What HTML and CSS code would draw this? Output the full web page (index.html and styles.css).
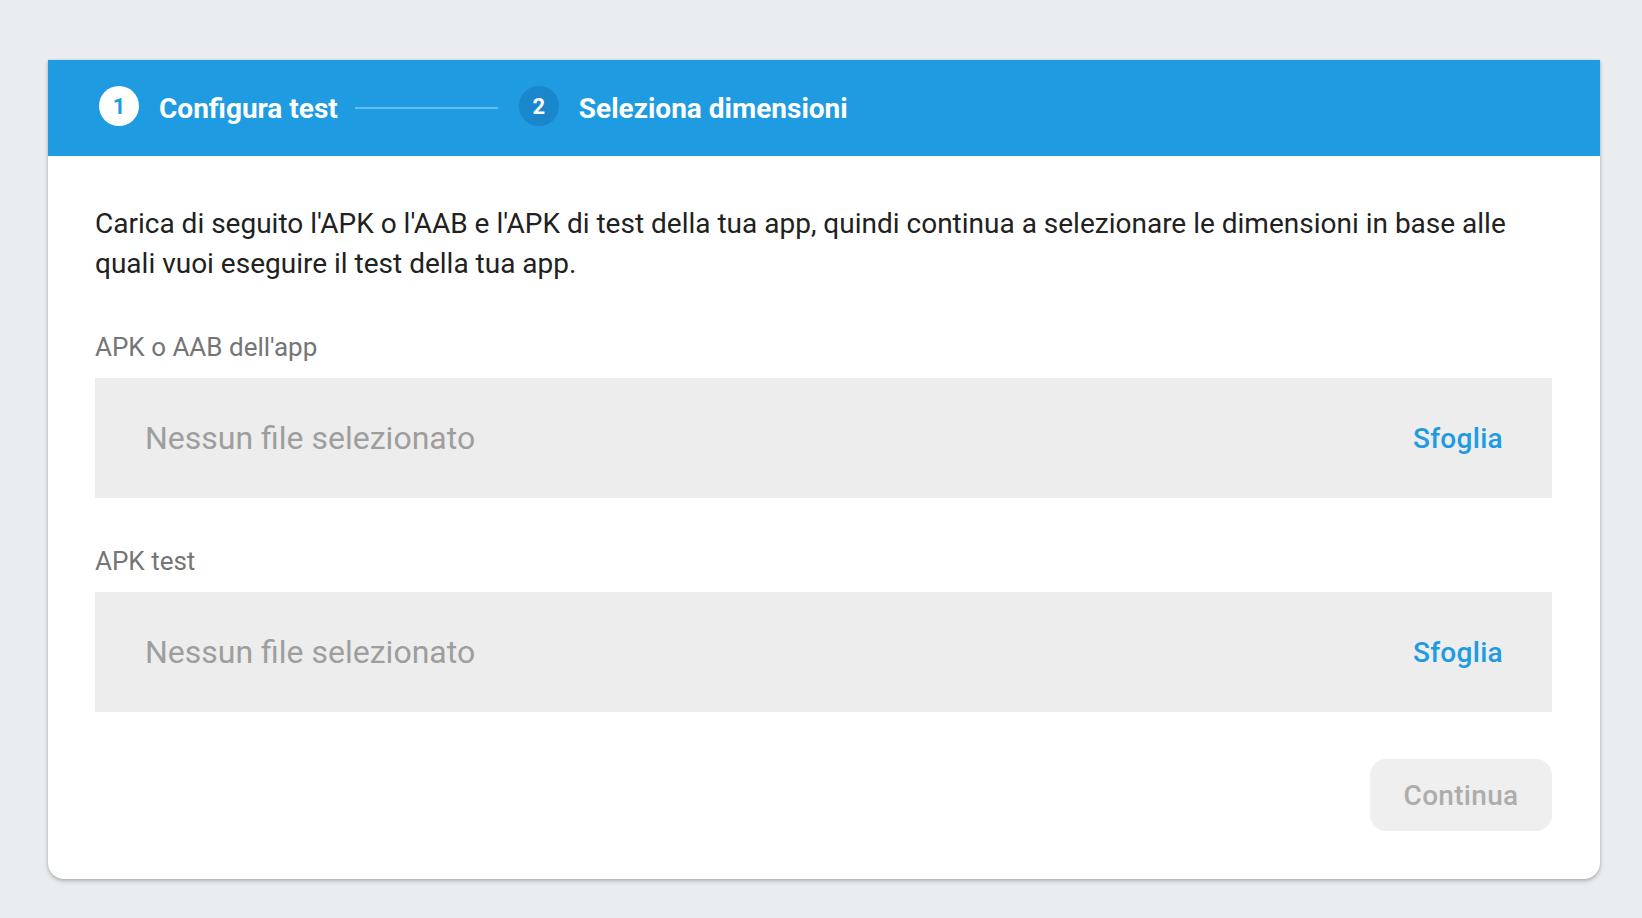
FILE: index.html
```html
<!DOCTYPE html>
<html lang="it">
<head>
<meta charset="utf-8">
<title>Configura test</title>
<link rel="stylesheet" href="styles.css">
</head>
<body>
<div class="card">
  <div class="stepper">
    <div class="step active">
      <span class="step-num">1</span>
      <span class="step-label">Configura test</span>
    </div>
    <div class="step-line"></div>
    <div class="step">
      <span class="step-num">2</span>
      <span class="step-label">Seleziona dimensioni</span>
    </div>
  </div>
  <div class="content">
    <p class="intro">Carica di seguito l'APK o l'AAB e l'APK di test della tua app, quindi continua a selezionare le dimensioni in base alle quali vuoi eseguire il test della tua app.</p>
    <div class="field">
      <div class="field-label">APK o AAB dell'app</div>
      <div class="file-box">
        <span class="placeholder">Nessun file selezionato</span>
        <span class="browse">Sfoglia</span>
      </div>
    </div>
    <div class="field">
      <div class="field-label">APK test</div>
      <div class="file-box">
        <span class="placeholder">Nessun file selezionato</span>
        <span class="browse">Sfoglia</span>
      </div>
    </div>
    <div class="actions">
      <button class="btn-continue" disabled>Continua</button>
    </div>
  </div>
</div>
</body>
</html>
```
FILE: styles.css
```css
html, body {
  margin: 0;
  padding: 0;
}
body {
  background: #e9edf0;
  font-family: Roboto, "Noto Sans", Arial, sans-serif;
  padding: 60px 42px 38px 48px;
}
.card {
  background: #ffffff;
  border-radius: 0 0 16px 16px;
  box-shadow: 0 2px 4px rgba(0, 0, 0, 0.25), 0 0 2px rgba(0, 0, 0, 0.12);
  overflow: hidden;
}
.stepper {
  height: 96px;
  background: #1e9be1;
  display: flex;
  align-items: center;
  padding-left: 51px;
  box-sizing: border-box;
}
.step {
  display: flex;
  align-items: center;
  gap: 20px;
}
.step-num {
  width: 40px;
  height: 40px;
  border-radius: 50%;
  background: #1a86cb;
  color: #ffffff;
  font-size: 22px;
  font-weight: 700;
  display: flex;
  align-items: center;
  justify-content: center;
  margin-top: -4px;
}
.step.active .step-num {
  background: #ffffff;
  color: #1e9be1;
}
.step-label {
  color: #ffffff;
  font-size: 28px;
  font-weight: 700;
}
.step-line {
  width: 143px;
  height: 2px;
  background: #64bdf0;
  margin: 0 21px 0 17px;
}
.content {
  padding: 48px 48px 48px 47px;
}
.intro {
  margin: 0 0 47px;
  font-size: 28px;
  line-height: 40px;
  color: #212121;
}
.field {
  margin-bottom: 47px;
}
.field-label {
  font-size: 26px;
  line-height: 32px;
  color: #757575;
  margin-bottom: 15px;
}
.file-box {
  height: 120px;
  background: #ededed;
  display: flex;
  align-items: center;
  justify-content: space-between;
  padding: 0 49px 0 50px;
}
.placeholder {
  font-size: 32px;
  color: #9e9e9e;
}
.browse {
  font-size: 28px;
  font-weight: 500;
  color: #1e9be1;
  letter-spacing: 0.3px;
}
.actions {
  display: flex;
  justify-content: flex-end;
}
.btn-continue {
  width: 182px;
  height: 72px;
  border: none;
  border-radius: 16px;
  background: #efefef;
  color: #adadad;
  font-family: Roboto, "Noto Sans", Arial, sans-serif;
  font-size: 28px;
  font-weight: 500;
  letter-spacing: 0.3px;
}
```
